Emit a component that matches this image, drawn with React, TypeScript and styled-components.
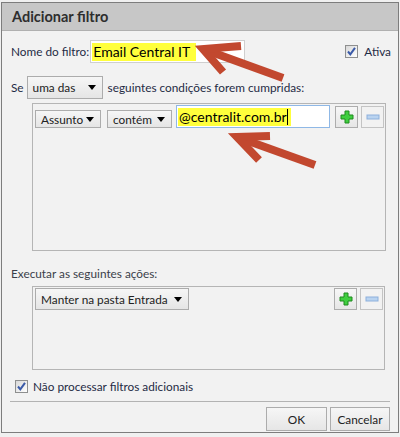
import React from "react";
import styled, { createGlobalStyle } from "styled-components";

const Global = createGlobalStyle`
  html, body { margin: 0; padding: 0; }
  body {
    background: #f0f0f0;
    font-family: Lato, "Noto Sans", sans-serif;
    font-size: 11.8px;
    color: #1f2b45;
  }
`;

const Page = styled.div`
  position: relative;
  width: 400px;
  height: 437px;
  padding: 2px 0 0 1px;
  box-sizing: border-box;
  overflow: hidden;
`;

const Dialog = styled.div`
  width: 398px;
  height: 431px;
  box-sizing: border-box;
  border: 1px solid #7d7d7d;
  background: #f2f2f2;
  display: flex;
  flex-direction: column;
`;

const Header = styled.div`
  height: 28px;
  box-sizing: border-box;
  background: #c7c7c7;
  border-bottom: 1px solid #b0b0b0;
  padding-left: 10px;
  display: flex;
  align-items: center;
  font-weight: 700;
  font-size: 14.5px;
  color: #2e2e2e;
`;

const Body = styled.div`
  flex: 1;
  padding: 9px 7px 0 9px;
  display: flex;
  flex-direction: column;
`;

const Row = styled.div<{ $mt?: number; $h?: number }>`
  display: flex;
  align-items: center;
  height: ${(p) => p.$h ?? 23}px;
  margin-top: ${(p) => p.$mt ?? 0}px;
`;

const Label = styled.span<{ $ml?: number; $mr?: number }>`
  white-space: nowrap;
  margin-left: ${(p) => p.$ml ?? 0}px;
  margin-right: ${(p) => p.$mr ?? 0}px;
`;

const TextBox = styled.div<{ $w: number; $focus?: boolean; $h?: number; $ml?: number }>`
  width: ${(p) => p.$w}px;
  height: ${(p) => p.$h ?? 23}px;
  margin-left: ${(p) => p.$ml ?? 0}px;
  box-sizing: border-box;
  background: #fff;
  border: 1px solid ${(p) => (p.$focus ? "#8fb8e6" : "#cfcfcf")};
  display: flex;
  align-items: center;
  padding-left: 1px;
  font-size: 14px;
  color: #000;
  flex-shrink: 0;
`;

const Highlight = styled.span<{ $pr?: number }>`
  background: #ffff3c;
  line-height: 18px;
  padding: 0 ${(p) => p.$pr ?? 0}px 0 1px;
  white-space: nowrap;
`;

const Caret = styled.span`
  display: inline-block;
  width: 1px;
  height: 16px;
  background: #000;
  vertical-align: -3px;
  margin-left: 0px;
`;

const Spacer = styled.div`
  flex: 1;
`;

const CheckBoxBox = styled.span<{ $ml?: number }>`
  width: 13px;
  height: 13px;
  margin-left: ${(p) => p.$ml ?? 0}px;
  box-sizing: border-box;
  border: 1px solid #8e8f8f;
  background: linear-gradient(135deg, #d8d8d8, #ffffff);
  display: inline-flex;
  align-items: center;
  justify-content: center;
  flex-shrink: 0;
`;

const CheckBox = ({ ml }: { ml?: number }) => (
  <CheckBoxBox $ml={ml}>
    <svg width="11" height="11" viewBox="0 0 11 11">
      <path d="M2 5.5 L4.3 8.3 L9 1.8" fill="none" stroke="#3a5aa8" strokeWidth="2" />
    </svg>
  </CheckBoxBox>
);

const SelectBox = styled.div<{ $w: number; $h?: number; $ml?: number }>`
  width: ${(p) => p.$w}px;
  height: ${(p) => p.$h ?? 23}px;
  margin-left: ${(p) => p.$ml ?? 0}px;
  box-sizing: border-box;
  border: 1px solid #acacac;
  background: linear-gradient(#f6f6f6, #e5e5e5);
  display: flex;
  align-items: center;
  justify-content: space-between;
  padding: 0 6px 0 5px;
  color: #222;
  flex-shrink: 0;
`;

const Tri = styled.span`
  width: 0;
  height: 0;
  border-left: 4px solid transparent;
  border-right: 4px solid transparent;
  border-top: 5px solid #000;
`;

const Select = ({ text, w, h, ml }: { text: string; w: number; h?: number; ml?: number }) => (
  <SelectBox $w={w} $h={h} $ml={ml}>
    <span>{text}</span>
    <Tri />
  </SelectBox>
);

const RuleBox = styled.div<{ $h: number; $mt: number; $w: number }>`
  margin-left: 21px;
  margin-top: ${(p) => p.$mt}px;
  width: ${(p) => p.$w}px;
  height: ${(p) => p.$h}px;
  box-sizing: border-box;
  border: 1px solid #b5b5b5;
  padding: 1px 1px 0 2px;
`;

const RuleRow = styled.div`
  display: flex;
  align-items: flex-end;
`;

const IconBtn = styled.div<{ $disabled?: boolean; $ml: number }>`
  width: 23px;
  height: 22px;
  margin-left: ${(p) => p.$ml}px;
  box-sizing: border-box;
  border: 1px solid ${(p) => (p.$disabled ? "#c4c4c4" : "#adadad")};
  background: ${(p) => (p.$disabled ? "#f2f2f2" : "linear-gradient(#f7f7f7, #e6e6e6)")};
  display: flex;
  align-items: center;
  justify-content: center;
  flex-shrink: 0;
`;

const PlusIcon = () => (
  <svg width="14" height="14" viewBox="0 0 14 14">
    <path
      d="M5 1 H9 V5 H13 V9 H9 V13 H5 V9 H1 V5 H5 Z"
      fill="#3fce3f"
      stroke="#1f8a1f"
      strokeWidth="1"
    />
  </svg>
);

const MinusIcon = () => (
  <svg width="14" height="6" viewBox="0 0 14 6">
    <rect x="1" y="1" width="12" height="4" fill="#b9d3f0" stroke="#8db0dc" strokeWidth="1" />
  </svg>
);

const Footer = styled.div`
  margin: 0 8px;
  height: 31px;
  box-sizing: border-box;
  border-top: 1px solid #b3b3b3;
  padding-top: 5px;
  display: flex;
  justify-content: flex-end;
  align-items: flex-start;
  gap: 3px;
`;

const Button = styled.div<{ $w: number }>`
  width: ${(p) => p.$w}px;
  height: 24px;
  box-sizing: border-box;
  border: 1px solid #acacac;
  background: linear-gradient(#f6f6f6, #e6e6e6);
  display: flex;
  align-items: center;
  justify-content: center;
  color: #222;
`;

const Overlay = styled.svg`
  position: absolute;
  left: 0;
  top: 0;
  pointer-events: none;
`;

const Arrow = ({ tip, tail, b1, b2 }: { tip: number[]; tail: number[]; b1: number[]; b2: number[] }) => (
  <g stroke="#c2482f" strokeWidth="8" fill="none" strokeLinejoin="miter">
    <line x1={tail[0]} y1={tail[1]} x2={tip[0]} y2={tip[1]} />
    <polyline points={`${b1[0]},${b1[1]} ${tip[0]},${tip[1]} ${b2[0]},${b2[1]}`} />
  </g>
);

export default function App() {
  return (
    <Page>
      <Global />
      <Dialog>
        <Header>Adicionar filtro</Header>
        <Body>
          <Row $mt={0}>
            <Label>Nome do filtro:</Label>
            <TextBox $w={155} $ml={1}>
              <Highlight $pr={6}>Email Central IT</Highlight>
            </TextBox>
            <Spacer />
            <CheckBox />
            <Label $ml={6}>Ativa</Label>
          </Row>
          <Row $mt={13}>
            <Label $mr={3}>Se</Label>
            <Select text="uma das" w={76} />
            <Label $ml={5}>seguintes condições forem cumpridas:</Label>
          </Row>
          <RuleBox $mt={4} $h={148} $w={354}>
            <RuleRow>
              <Select text="Assunto" w={66} h={18} />
              <Select text="contém" w={65} h={18} ml={6} />
              <TextBox $w={154} $focus $h={23} $ml={4}>
                <Highlight $pr={3}>
                  @centralit.com.br<Caret />
                </Highlight>
              </TextBox>
              <IconBtn $ml={5}>
                <PlusIcon />
              </IconBtn>
              <IconBtn $ml={3} $disabled>
                <MinusIcon />
              </IconBtn>
            </RuleRow>
          </RuleBox>
          <Row $mt={14} $h={16}>
            <Label style={{ color: "#3a3f4a" }}>Executar as seguintes ações:</Label>
          </Row>
          <RuleBox $mt={5} $h={84} $w={353}>
            <RuleRow>
              <Select text="Manter na pasta Entrada" w={154} h={22} />
              <Spacer />
              <IconBtn $ml={0}>
                <PlusIcon />
              </IconBtn>
              <IconBtn $ml={3} $disabled>
                <MinusIcon />
              </IconBtn>
            </RuleRow>
          </RuleBox>
          <Row $mt={9} $h={14}>
            <CheckBox ml={4} />
            <Label $ml={5}>Não processar filtros adicionais</Label>
          </Row>
        </Body>
        <Footer>
          <Button $w={61}>OK</Button>
          <Button $w={60}>Cancelar</Button>
        </Footer>
      </Dialog>
      <Overlay width="400" height="437" viewBox="0 0 400 437">
        <Arrow tip={[203, 49]} tail={[283, 78]} b1={[241, 46]} b2={[223, 72]} />
        <Arrow tip={[237, 137]} tail={[315, 165]} b1={[270, 136]} b2={[259, 160]} />
      </Overlay>
    </Page>
  );
}
